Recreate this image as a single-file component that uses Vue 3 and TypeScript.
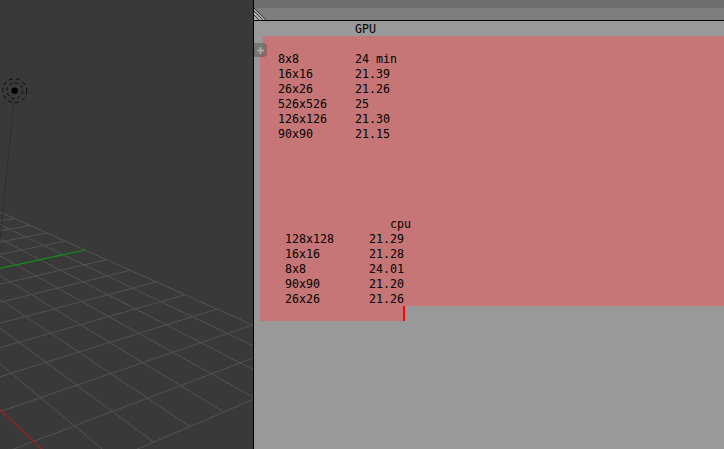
<script setup lang="ts">
type Pt = [number, number];
type Seg = [number, number, number, number];

// Floor plane: a homography from grid cells to screen, fixed by four known corners.
const c0: Pt = [85, 250];
const c1: Pt = [252.7, 325];
const c2: Pt = [1.5, 411];
const c3: Pt = [-121.3, 294.5];
const dx1 = c1[0] - c2[0];
const dy1 = c1[1] - c2[1];
const dx2 = c3[0] - c2[0];
const dy2 = c3[1] - c2[1];
const sx = c0[0] - c1[0] + c2[0] - c3[0];
const sy = c0[1] - c1[1] + c2[1] - c3[1];
const det = dx1 * dy2 - dx2 * dy1;
const g = (sx * dy2 - dx2 * sy) / det;
const h = (dx1 * sy - sx * dy1) / det;
const project = (i: number, j: number): Pt => {
  const u = i / 6;
  const v = j / 8;
  const w = g * u + h * v + 1;
  return [
    (c1[0] - c0[0] + g * c1[0]) * u / w + (c3[0] - c0[0] + h * c3[0]) * v / w + c0[0] / w,
    (c1[1] - c0[1] + g * c1[1]) * u / w + (c3[1] - c0[1] + h * c3[1]) * v / w + c0[1] / w,
  ];
};
const seg = (a: Pt, b: Pt): Seg => [a[0], a[1], b[0], b[1]];
const grid: Seg[] = [];
for (let i = -8; i <= 8; i++) {
  if (i !== 0) grid.push(seg(project(i, 0), project(i, 16)));
}
for (let j = 0; j <= 16; j++) {
  if (j !== 8) grid.push(seg(project(-8, j), project(8, j)));
}
const green: Seg = seg(project(0, 0), project(0, 16));
const red: Seg = seg(project(-8, 8), project(8, 8));

const lines: string[] = [
  '             GPU', '',
  '  8x8        24 min', '  16x16      21.39', '  26x26      21.26',
  '  526x526    25', '  126x126    21.30', '  90x90      21.15',
  '', '', '', '', '',
  '                  cpu',
  '   128x128     21.29', '   16x16       21.28', '   8x8         24.01',
  '   90x90       21.20', '   26x26       21.26', '',
];
const rowClass = (i: number): string => {
  if (i === lines.length - 1) return 'row last';
  if (i === 0) return 'row';
  return i === 1 ? 'row sel first' : 'row sel';
};
</script>

<template>
  <div class="app">
    <svg class="viewport" width="253" height="449" viewBox="0 0 253 449">
      <line v-for="(s, i) in grid" :key="i" :x1="s[0]" :y1="s[1]" :x2="s[2]" :y2="s[3]" stroke="#525252" />
      <line :x1="red[0]" :y1="red[1]" :x2="red[2]" :y2="red[3]" stroke="#a01f1f" stroke-width="1.2" />
      <line :x1="green[0]" :y1="green[1]" :x2="green[2]" :y2="green[3]" stroke="#129212" stroke-width="1.2" />
      <line x1="14" y1="100" x2="0" y2="240" stroke="#2c2c2c" stroke-width="0.8" />
      <circle cx="14.7" cy="90.7" r="3.2" fill="#000" />
      <circle cx="14.7" cy="90.7" r="7.8" fill="none" stroke="#0c0c0c" stroke-dasharray="3.5 2.6" />
      <circle cx="14.7" cy="90.7" r="12" fill="none" stroke="#0c0c0c" stroke-dasharray="4 3.2" />
    </svg>
    <div class="right">
      <div class="top"></div>
      <div class="header">
        <svg class="hatch" width="12" height="12" viewBox="0 0 12 12">
          <path d="M0 0V12H12Z" fill="#aaa" />
          <path d="M0 3L9 12M0 7L5 12M0 0L12 12" stroke="#3a3a3a" fill="none" />
        </svg>
      </div>
      <div class="editor">
        <div v-for="(l, i) in lines" :key="i" :class="rowClass(i)">{{ l }}</div>
        <div class="plus">
          <svg width="9" height="9" viewBox="0 0 9 9"><path d="M4.5 1V8M1 4.5H8" stroke="#a8a8a8" stroke-width="2" /></svg>
        </div>
      </div>
    </div>
  </div>
</template>

<style scoped>
.app {
  display: flex;
  width: 724px;
  height: 449px;
  overflow: hidden;
  background: #393939;
}
.viewport {
  flex: none;
  display: block;
}
.right {
  flex: 1;
  min-width: 0;
  display: flex;
  flex-direction: column;
  border-left: 1px solid #000;
}
.top {
  height: 8px;
  background: #6f6f6f;
}
.header {
  height: 12px;
  background: #7e7e7e;
  border-bottom: 1px solid #000;
}
.hatch {
  display: block;
}
.editor {
  position: relative;
  flex: 1;
  background: #999;
  color: #000;
  font: 11.63px/17px "DejaVu Sans Mono", monospace;
}
.row {
  height: 15px;
  margin-left: 6px;
  padding-left: 4px;
  white-space: pre;
}
.sel {
  background: #c67676;
}
.first {
  margin-left: 9px;
  padding-left: 1px;
}
.last {
  width: 145px;
  padding-left: 0;
  background: #c67676;
  box-shadow: inset -2px 0 0 #f00;
}
.plus {
  position: absolute;
  left: 0;
  top: 22px;
  width: 13px;
  height: 14px;
  display: flex;
  align-items: center;
  justify-content: center;
  background: rgba(90, 90, 90, 0.55);
  border-radius: 0 4px 4px 0;
}
.plus svg {
  display: block;
}
</style>
